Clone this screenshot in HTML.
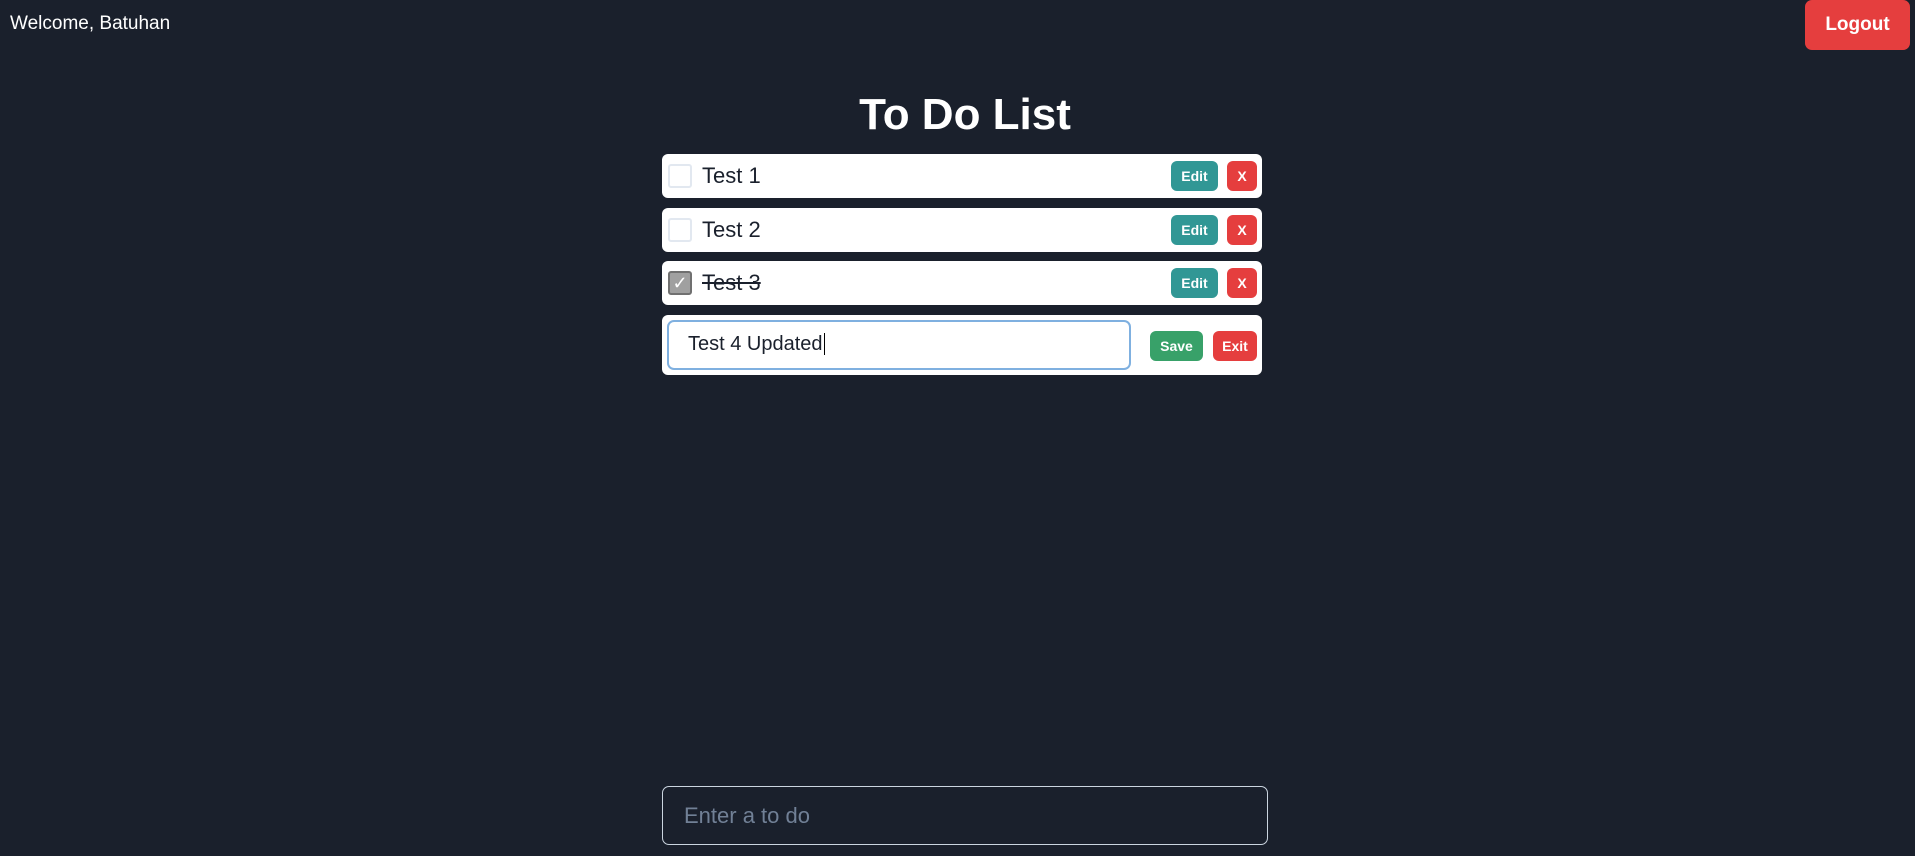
<!DOCTYPE html>
<html><head><style>
*{box-sizing:border-box;margin:0;padding:0}
body{width:1915px;height:856px;background:#1a202c;font-family:"Liberation Sans",sans-serif;position:relative;overflow:hidden;color:#fff}
.abs{position:absolute}
.welcome{left:10px;top:13px;font-size:19px}
.logout{left:1805px;top:0;width:105px;height:50px;background:#e53e3e;border-radius:7px;font-weight:bold;font-size:19px;display:flex;align-items:center;justify-content:center}
h1{position:absolute;left:0;width:1930px;text-align:center;top:90px;font-size:44px;font-weight:bold}
.card{position:absolute;left:662px;width:600px;background:#fff;border-radius:6px;color:#1a202c}
.cb{position:absolute;left:6px;width:24px;height:24px;border:2px solid #e2e8f0;border-radius:3px}
.txt{position:absolute;left:40px;font-size:22px}
.btn{position:absolute;height:30px;border-radius:6px;color:#fff;font-weight:bold;font-size:14px;display:flex;align-items:center;justify-content:center}
.edit{left:509px;width:47px;background:#319795}
.x{left:565px;width:30px;background:#e53e3e}
</style></head><body>
<div class="abs welcome">Welcome, Batuhan</div>
<div class="abs logout">Logout</div>
<h1>To Do List</h1>

<div class="card" style="top:154px;height:44px">
<div class="cb" style="top:10px"></div><div class="txt" style="top:9px">Test 1</div>
<div class="btn edit" style="top:7px">Edit</div><div class="btn x" style="top:7px">X</div></div>

<div class="card" style="top:208px;height:44px">
<div class="cb" style="top:10px"></div><div class="txt" style="top:9px">Test 2</div>
<div class="btn edit" style="top:7px">Edit</div><div class="btn x" style="top:7px">X</div></div>

<div class="card" style="top:261px;height:44px">
<div class="cb" style="top:10px;background:#a0a0a0;border-color:#707070;color:#fff;font-size:18px;text-align:center;line-height:20px">✓</div>
<div class="txt" style="top:9px;text-decoration:line-through">Test 3</div>
<div class="btn edit" style="top:7px">Edit</div><div class="btn x" style="top:7px">X</div></div>

<div class="card" style="top:315px;height:60px">
<div class="abs" style="left:5px;top:5px;width:464px;height:50px;border:2px solid #7fb0e0;border-radius:7px"></div>
<div class="txt" style="left:26px;top:18px;font-size:20px">Test 4 Updated<span style="border-left:1px solid #000;margin-left:1px"></span></div>
<div class="btn" style="left:488px;width:53px;top:16px;background:#38a169">Save</div>
<div class="btn" style="left:551px;width:44px;top:16px;background:#e53e3e">Exit</div></div>

<div class="abs" style="left:662px;top:786px;width:606px;height:59px;border:1px solid #cbd5e0;border-radius:7px;color:#718096;font-size:22px;padding:16px 0 0 21px">Enter a to do</div>
</body></html>
